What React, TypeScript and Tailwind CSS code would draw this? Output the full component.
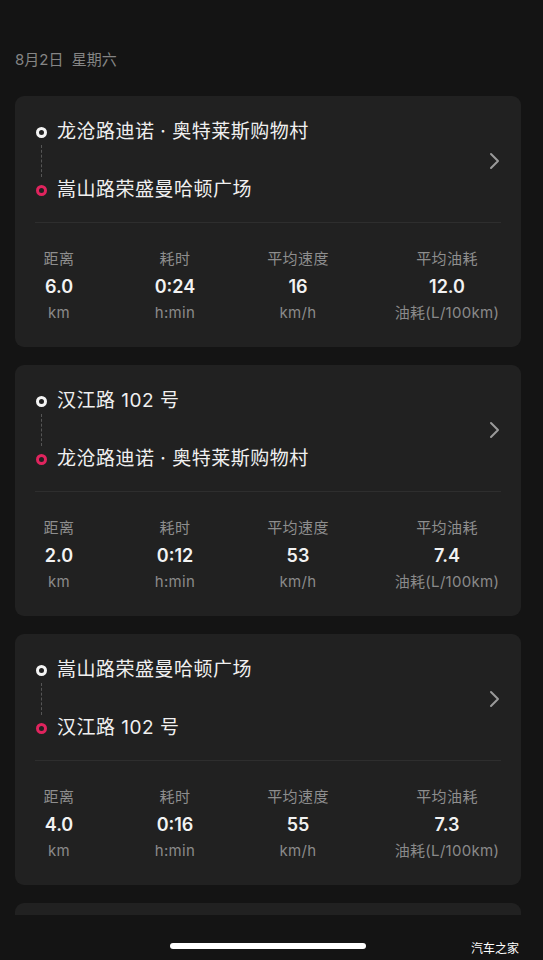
import React from 'react';

type Trip = {
  from: string;
  to: string;
  distance: string;
  duration: string;
  speed: string;
  fuel: string;
};

const trips: Trip[] = [
  { from: '龙沧路迪诺 · 奥特莱斯购物村', to: '嵩山路荣盛曼哈顿广场', distance: '6.0', duration: '0:24', speed: '16', fuel: '12.0' },
  { from: '汉江路 102 号', to: '龙沧路迪诺 · 奥特莱斯购物村', distance: '2.0', duration: '0:12', speed: '53', fuel: '7.4' },
  { from: '嵩山路荣盛曼哈顿广场', to: '汉江路 102 号', distance: '4.0', duration: '0:16', speed: '55', fuel: '7.3' },
];

const font = { fontFamily: "Inter, 'Noto Sans CJK SC', sans-serif" };

const Stat = ({ label, value, unit, className }: { label: string; value: string; unit: string; className: string }) => (
  <div className={`flex flex-col items-center ${className}`}>
    <span className="text-[15px] leading-[20px] tracking-[0.4px] text-[#8e8e8e]">{label}</span>
    <span className="mt-[8px] text-[18px] leading-[20px] font-semibold text-[#f2f2f2]">{value}</span>
    <span className="mt-[6px] text-[15px] leading-[20px] tracking-[0.3px] text-[#8a8a8a]">{unit}</span>
  </div>
);

const TripCard = ({ trip }: { trip: Trip }) => (
  <div className="rounded-[9px] bg-[#212121] h-[251px] shrink-0">
    <div className="flex items-center pl-[21px] pr-[20px] pt-[23px]">
      <div className="flex-1">
        <div className="flex items-center h-[26px]">
          <span className="w-[11px] h-[11px] rounded-full border-[3px] border-[#f4f4f4] mr-[10px]" />
          <span className="text-[19px] tracking-[0.5px] text-[#f0f0f0]">{trip.from}</span>
        </div>
        <div className="ml-[5px] h-[32px] border-l border-dashed border-[#555]" />
        <div className="flex items-center h-[26px]">
          <span className="w-[11px] h-[11px] rounded-full border-[3px] border-[#e0245e] mr-[10px]" />
          <span className="text-[19px] tracking-[0.5px] text-[#f0f0f0]">{trip.to}</span>
        </div>
      </div>
      <svg width="12" height="18" viewBox="0 0 12 18" fill="none">
        <path d="M2 2l7 7-7 7" stroke="#9a9a9a" strokeWidth="2" strokeLinecap="round" strokeLinejoin="round" />
      </svg>
    </div>
    <div className="mx-[20px] mt-[19px] h-px bg-[#2e2e2e]" />
    <div className="flex pl-[14px] pt-[26px]">
      <Stat className="w-[60px]" label="距离" value={trip.distance} unit="km" />
      <Stat className="w-[80px] ml-[46px]" label="耗时" value={trip.duration} unit="h:min" />
      <Stat className="w-[80px] ml-[43px]" label="平均速度" value={trip.speed} unit="km/h" />
      <Stat className="w-[120px] ml-[49px]" label="平均油耗" value={trip.fuel} unit="油耗(L/100km)" />
    </div>
  </div>
);

export default function App() {
  return (
    <div className="w-[543px] h-[960px] bg-[#141414] overflow-hidden flex flex-col" style={font}>
      <div className="h-[915px] overflow-hidden flex flex-col pl-[15px] pr-[22px]">
        <div className="pt-[50px] text-[15px] leading-[20px] text-[#858585]">8月2日&nbsp;&nbsp;星期六</div>
        <div className="mt-[26px] flex flex-col gap-[18px]">
          {trips.map((t, i) => (
            <TripCard key={i} trip={t} />
          ))}
          <div className="rounded-[9px] bg-[#212121] h-[60px] shrink-0" />
        </div>
      </div>
      <div className="relative flex-1">
        <div className="ml-[170px] mt-[28px] w-[196px] h-[6px] rounded-full bg-white" />
        <span className="absolute right-[24px] bottom-[2px] text-[12px] text-white">汽车之家</span>
      </div>
    </div>
  );
}
